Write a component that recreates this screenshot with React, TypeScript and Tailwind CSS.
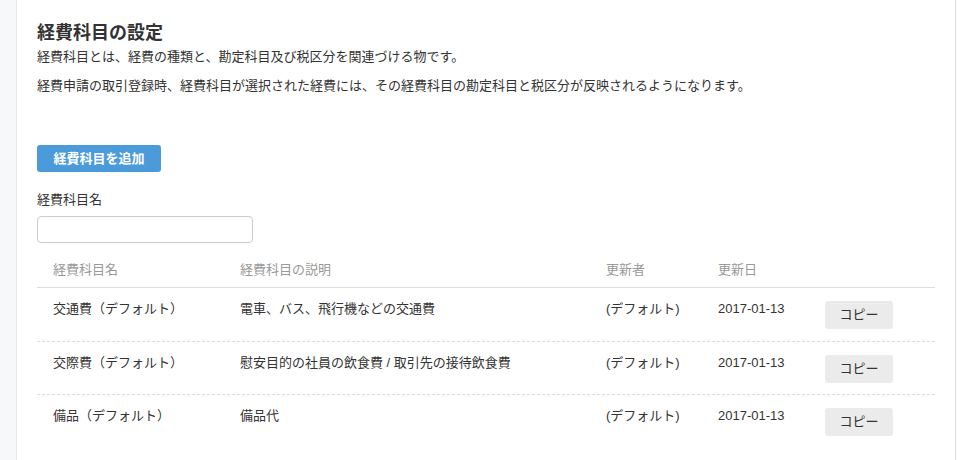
const rows = [
  { name: '交通費（デフォルト）', desc: '電車、バス、飛行機などの交通費', by: '(デフォルト)', date: '2017-01-13' },
  { name: '交際費（デフォルト）', desc: '慰安目的の社員の飲食費 / 取引先の接待飲食費', by: '(デフォルト)', date: '2017-01-13' },
  { name: '備品（デフォルト）', desc: '備品代', by: '(デフォルト)', date: '2017-01-13' },
];

const cols = 'grid grid-cols-[203px_366px_112px_107px_110px]';

export default function App() {
  return (
    <div
      className="flex h-[460px] w-[957px] overflow-hidden bg-[#f7f8fa] text-[13px] text-[#333]"
      style={{ fontFamily: '"Liberation Sans", "Noto Sans CJK JP", sans-serif' }}
    >
      <div className="w-[17px] shrink-0 border-r border-[#e6e8eb]" />
      <div className="w-[939px] shrink-0 border-r border-[#e2e2e2] bg-white pl-[20px] pr-[20px] pt-[21px]">
        <h1 className="text-[18px] font-bold leading-[24px] text-[#333]">経費科目の設定</h1>
        <p className="mt-[2px] leading-[20px]">経費科目とは、経費の種類と、勘定科目及び税区分を関連づける物です。</p>
        <p className="mt-[9px] leading-[20px]">
          経費申請の取引登録時、経費科目が選択された経費には、その経費科目の勘定科目と税区分が反映されるようになります。
        </p>

        <button
          type="button"
          className="mt-[49px] flex h-[27px] w-[124px] items-center justify-center rounded-[3px] bg-[#4b9bdb] text-[13px] font-bold text-white"
        >
          経費科目を追加
        </button>

        <p className="mt-[18px] leading-[20px]">経費科目名</p>
        <input className="mt-[6px] block h-[27px] w-[216px] rounded-[4px] border border-[#ccc] bg-white px-2 outline-none" />

        <div className="mt-[9px] w-[898px]">
          <div className={`${cols} h-[36px] border-b border-[#ddd] pt-[8px] leading-[20px] text-[#999]`}>
            <div className="pl-[16px]">経費科目名</div>
            <div>経費科目の説明</div>
            <div>更新者</div>
            <div>更新日</div>
            <div />
          </div>
          {rows.map((r, i) => (
            <div
              key={r.name}
              className={`${cols} h-[53px] leading-[20px] ${i > 0 ? 'border-t border-dashed border-[#ddd]' : ''}`}
            >
              <div className="pl-[16px] pt-[11px]">{r.name}</div>
              <div className="pt-[11px]">{r.desc}</div>
              <div className="pt-[11px]">{r.by}</div>
              <div className="pt-[11px]">{r.date}</div>
              <div className="pt-[13px]">
                <button
                  type="button"
                  className="flex h-[28px] w-[68px] items-center justify-center rounded-[3px] bg-[#ebebeb] text-[13px] text-[#333]"
                >
                  コピー
                </button>
              </div>
            </div>
          ))}
        </div>
      </div>
    </div>
  );
}
